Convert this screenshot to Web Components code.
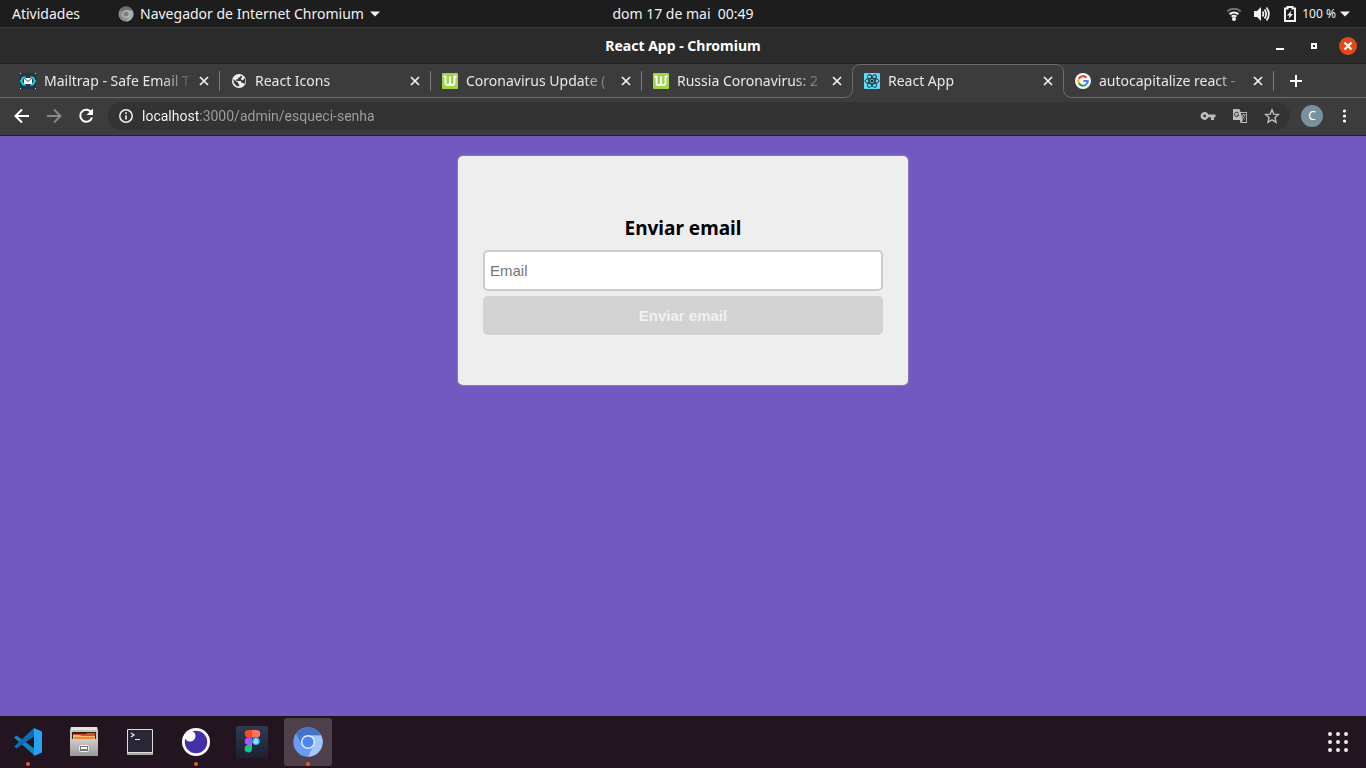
<!DOCTYPE html>
<html lang="pt-BR">
<head>
<meta charset="utf-8">
<title>React App</title>
<style>
html, body { height: 100%; margin: 0; }
body { font-family: "Noto Sans", "Open Sans", sans-serif; font-size: 14px; line-height: 20px; color: #f2f2f2; }
</style>
</head>
<body>
<desktop-shell></desktop-shell>

<template id="t-desktop-shell">
<style>
:host { display: flex; flex-direction: column; min-height: 100%; background: #7159c1; }
main { flex: 1; display: flex; justify-content: center; align-items: flex-start; padding: 20px; }
</style>
<top-bar></top-bar>
<title-bar>React App - Chromium</title-bar>
<tab-strip>
  <browser-tab label="Mailtrap - Safe Email T">
    <svg viewBox="0 0 16 16"><rect width="16" height="16" rx="1" fill="#293346"/><path d="M5.500 4.200C3 4.200 2.200 5 2.200 6.500L1 8l1.200 1.500c0 1.500.8 2.300 3.300 2.300M10.500 4.200c2.500 0 3.300.8 3.300 2.300L15 8l-1.200 1.500c0 1.500-.8 2.300-3.300 2.300" fill="none" stroke="#08e5e6" stroke-width="1.800"/><rect x="4" y="5" width="8" height="6" fill="#fff"/><path d="M4 5l4 3.500L12 5" fill="none" stroke="#293346" stroke-width=".9"/><path d="M0 0h1v1H0zM15 0h1v1h-1zM0 15h1v1H0zM15 15h1v1h-1z" fill="#ccc"/></svg>
  </browser-tab>
  <browser-tab label="React Icons">
    <svg viewBox="0 0 16 16"><circle cx="8" cy="8" r="7" fill="#f2f2f2"/><path d="M2.500 6l3 2.800 1.500.2v1.300l1.200 1.200v2C5 13.500 2 10.500 2.500 6zM8.800 2.600l.9.4-1 1.300-1.700.5v1.400H5.200V8h4.400l1.300 2h1.300l1.100 1c1.400-2 1.300-4.500.2-6L12 7.200l-1.600-.4-.5-1.200 1.400-1.400-.3-1z" fill="#3c3c3c"/></svg>
  </browser-tab>
  <browser-tab label="Coronavirus Update (">
    <svg viewBox="0 0 16 16"><rect width="16" height="16" rx="1" fill="#9dd749"/><path d="M1.500 3.500h2v6c0 1.800.7 2.600 2.100 2.600S8 11.300 8 9.500v-6v6c0 1.800.9 2.600 2.400 2.600s2.100-.8 2.100-2.600v-6h2" fill="none" stroke="#fff" stroke-width="1.800"/></svg>
  </browser-tab>
  <browser-tab label="Russia Coronavirus: 2" last-before>
    <svg viewBox="0 0 16 16"><rect width="16" height="16" rx="1" fill="#9dd749"/><path d="M1.500 3.500h2v6c0 1.800.7 2.600 2.100 2.600S8 11.300 8 9.500v-6v6c0 1.800.9 2.600 2.400 2.600s2.100-.8 2.100-2.600v-6h2" fill="none" stroke="#fff" stroke-width="1.800"/></svg>
  </browser-tab>
  <browser-tab label="React App" active>
    <svg viewBox="0 0 16 16"><rect width="16" height="16" rx="1" fill="#61dafb"/><g fill="none" stroke="#20272e" stroke-width=".9"><ellipse cx="8" cy="8" rx="7" ry="2.700"/><ellipse cx="8" cy="8" rx="7" ry="2.700" transform="rotate(60 8 8)"/><ellipse cx="8" cy="8" rx="7" ry="2.700" transform="rotate(120 8 8)"/></g><circle cx="8" cy="8" r="1.500" fill="#20272e"/></svg>
  </browser-tab>
  <browser-tab label="autocapitalize react -">
    <svg viewBox="0 0 16 16"><circle cx="8" cy="8" r="8" fill="#fff"/><g fill="none" stroke-width="2.200"><path d="M11.500 4.700A4.700 4.700 0 0 0 3.800 5.900" stroke="#ea4335"/><path d="M3.800 5.900a4.700 4.700 0 0 0 0 4.200" stroke="#fbbc05"/><path d="M3.800 10.100a4.700 4.700 0 0 0 7.300 1.400" stroke="#34a853"/><path d="M11.100 11.500A4.700 4.700 0 0 0 12.700 8H8.200" stroke="#4285f4"/></g></svg>
  </browser-tab>
</tab-strip>
<nav-bar></nav-bar>
<main><email-card></email-card></main>
<app-dock></app-dock>
</template>

<template id="t-top-bar">
<style>
:host { display: grid; grid-template-columns: 1fr auto 1fr; align-items: center; height: 27px; background: #1d1d1d; border-bottom: 1px solid #3b3b3b; }
button { font: inherit; color: inherit; background: none; border: 0; padding: 0; display: flex; align-items: center; white-space: pre; }
.left { display: flex; gap: 38px; padding-left: 12px; }
.right { justify-self: end; padding-right: 16px; gap: 12px; font-size: 12px; }
svg { display: block; }
.app { gap: 6px; }
.pct { display: flex; align-items: center; gap: 1px; margin-left: -8px; }
</style>
<div class="left">
  <button>Atividades</button>
  <button class="app">
    <svg width="16" height="16" viewBox="0 0 16 16"><circle cx="8" cy="8" r="7.500" fill="#8d8d8d"/><path d="M8 8L1.500 4.200A7.500 7.500 0 0 1 14.600 4.500H8z" fill="#6e6e6e"/><path d="M8 15.500A7.500 7.500 0 0 0 14.600 4.500H8L11 10z" fill="#a9a9a9"/><circle cx="8" cy="8" r="3.700" fill="#c9c9c9"/><circle cx="8" cy="8" r="2.800" fill="#808080"/></svg>
    <span>Navegador de Internet Chromium</span>
    <svg width="10" height="6" viewBox="0 0 10 6"><path d="M0 .5h10L5 5.500z" fill="#f2f2f2"/></svg>
  </button>
</div>
<button>dom 17 de mai  00:49</button>
<button class="right" aria-label="Sistema">
  <svg width="16" height="16" viewBox="0 0 16 16"><g fill="none" stroke-width="2"><path d="M1.300 5.500a9.500 9.500 0 0 1 13.400 0" stroke="#777"/><path d="M3.600 8.300a6.200 6.200 0 0 1 8.800 0M5.700 10.700a3.200 3.200 0 0 1 4.600 0" stroke="#f2f2f2"/></g><circle cx="8" cy="13" r="2" fill="#f2f2f2"/></svg>
  <svg width="16" height="16" viewBox="0 0 16 16"><path d="M0 5h3l4-4v14l-4-4H0z" fill="#f2f2f2"/><g fill="none" stroke="#f2f2f2" stroke-width="1.700"><path d="M8.500 5.500q1.800 2.500 0 5M10.500 3.500q3.300 4.500 0 9M12.500 1.500q4.800 6.500 0 13"/></g></svg>
  <svg width="16" height="16" viewBox="0 0 16 16"><path d="M3 2.500h2.500V1h5v1.500H13V15H3z" fill="none" stroke="#f2f2f2" stroke-width="2"/><path d="M9.500 4.500L5 9.500h2.500L6.500 13 11 8H8.500z" fill="#f2f2f2"/></svg>
  <span class="pct">100 % <svg width="10" height="6" viewBox="0 0 10 6"><path d="M0 .5h10L5 5.500z" fill="#f2f2f2"/></svg></span>
</button>
</template>

<template id="t-title-bar">
<style>
:host { display: grid; grid-template-columns: 1fr auto 1fr; align-items: center; height: 35px; background: #2b2b2b; border-bottom: 1px solid #222; font-weight: 700; color: #fff; }
.ctl { grid-column: 3; justify-self: end; display: flex; gap: 16px; padding-right: 9px; }
.name { grid-column: 2; }
button { width: 18px; height: 18px; padding: 0; border: 0; background: none; border-radius: 50%; }
button.x { background: #e44a19; }
svg { display: block; }
</style>
<span class="name"><slot></slot></span>
<div class="ctl">
  <button aria-label="Minimizar"><svg width="18" height="18"><path d="M5 11h8v2H5z" fill="#fff"/></svg></button>
  <button aria-label="Maximizar"><svg width="18" height="18"><path d="M7 7h4v4H7z" fill="none" stroke="#fff" stroke-width="2"/></svg></button>
  <button class="x" aria-label="Fechar"><svg width="18" height="18"><path d="M5.500 5.500l7 7m0-7l-7 7" stroke="#fff" stroke-width="2.200"/></svg></button>
</div>
</template>

<template id="t-tab-strip">
<style>
:host { display: flex; height: 33px; padding-left: 9px; background: #3c3c3c; border-bottom: 1px solid #6d6d6d; }
button { padding: 0 14px; border: 0; background: none; }
svg { display: block; }
</style>
<slot></slot>
<button aria-label="Nova aba"><svg width="16" height="16"><path d="M8 2v12M2 8h12" stroke="#fff" stroke-width="2"/></svg></button>
</template>

<template id="t-browser-tab">
<style>
:host { position: relative; display: flex; align-items: center; flex: 0 1 211px; min-width: 0; box-sizing: border-box; padding: 0 9px 0 11px; }
:host(:last-of-type) { flex-basis: 210px; }
:host::after { content: ""; position: absolute; right: 0; top: 7px; width: 1px; height: 20px; background: #7c7c7c; }
:host([active])::after, :host([last-before])::after { display: none; }
.shape { display: none; }
:host([active]) .shape { display: block; position: absolute; left: -9px; top: 0; width: 229px; height: 34px; }
.title { position: relative; flex: 1; min-width: 0; display: flex; align-items: center; gap: 8px; padding: 0; border: 0; background: none; font: inherit; color: #e8e8e8; }
.label { flex: 1; min-width: 0; overflow: hidden; white-space: nowrap; text-align: left; -webkit-mask-image: linear-gradient(90deg, #000 calc(100% - 32px), transparent); mask-image: linear-gradient(90deg, #000 calc(100% - 32px), transparent); }
::slotted(svg) { display: block; flex: none; width: 16px; height: 16px; }
.close { position: relative; flex: none; width: 14px; height: 14px; margin-left: 4px; padding: 0; border: 0; background: none; }
.close svg { display: block; }
</style>
<svg class="shape" viewBox="0 0 229 34"><path d="M0 33.500c5 0 8.500-3 8.500-8V8c0-4.500 3-7.500 8-7.500h195c5 0 8 3 8 7.500v17.500c0 5 4 8 9 8V34H0z" fill="#3c3c3c"/><path d="M0 33.500c5 0 8.500-3 8.500-8V8c0-4.500 3-7.500 8-7.500h195c5 0 8 3 8 7.500v17.500c0 5 4 8 9 8" fill="none" stroke="#6d6d6d"/></svg>
<button class="title"><slot></slot><span class="label"></span></button>
<button class="close" aria-label="Fechar aba"><svg width="14" height="14"><path d="M3 3l8 8m0-8l-8 8" stroke="#f2f2f2" stroke-width="1.700"/></svg></button>
</template>

<template id="t-nav-bar">
<style>
:host { display: flex; align-items: center; height: 36px; padding: 0 11px 1px 12px; background: #3c3c3c; border-bottom: 1px solid #222; }
button { flex: none; padding: 0; border: 0; background: none; }
svg { display: block; }
.nav { display: flex; gap: 12px; margin-right: 12px; }
.box { flex: 1; display: flex; align-items: center; height: 28px; padding: 0 10px 0 8px; border-radius: 14px; background: #333; }
input { flex: 1; min-width: 0; height: 20px; margin-left: 6px; padding: 0; border: 0; outline: 0; font: 14px Roboto, "Noto Sans", sans-serif; color: transparent; -webkit-text-fill-color: transparent; background: linear-gradient(90deg, #fff 58px, #a0a0a0 58px); -webkit-background-clip: text; background-clip: text; }
.acts { display: flex; gap: 16px; }
.avatar { width: 22px; height: 22px; margin: 0 12px 0 11px; border-radius: 50%; background: #78909c; color: #fff; font: inherit; font-size: 12px; }
</style>
<div class="nav">
  <button aria-label="Voltar"><svg width="20" height="20"><path d="M17 10H4M10 3.500L3.500 10l6.500 6.500" fill="none" stroke="#fff" stroke-width="2"/></svg></button>
  <button aria-label="Avançar"><svg width="20" height="20"><path d="M3 10h13M10 3.500l6.500 6.500-6.500 6.500" fill="none" stroke="#888" stroke-width="2"/></svg></button>
  <button aria-label="Recarregar"><svg width="20" height="20"><path d="M15.600 7A6 6 0 1 0 16 11.500" fill="none" stroke="#fff" stroke-width="2"/><path d="M17 2.500V9h-6.500z" fill="#fff"/></svg></button>
</div>
<div class="box">
  <button aria-label="Informações do site"><svg width="20" height="20"><circle cx="10" cy="10" r="6.200" fill="none" stroke="#f2f2f2" stroke-width="1.500"/><path d="M9.200 9.200h1.600v4.300H9.200zM9.200 6.300h1.600v1.700H9.200z" fill="#f2f2f2"/></svg></button>
  <input aria-label="Endereço" value="localhost:3000/admin/esqueci-senha" spellcheck="false">
  <div class="acts">
    <button aria-label="Senhas"><svg width="16" height="16"><path d="M8.300 6.500A4 4 0 1 0 8.300 9.300H11V12h3V9.300h1.500V6.500zM4.600 9.300a1.400 1.400 0 1 1 0-2.800 1.400 1.400 0 0 1 0 2.800z" fill="#bdbdbd"/></svg></button>
    <button aria-label="Traduzir"><svg width="16" height="16"><path d="M1 1h6.500l1 3H15v11H8.500L7.800 12H1z" fill="#bdbdbd"/><path d="M8.900 4.900h5.200v9.200H9.700l1.200-1.900z" fill="#333"/><path d="M6.500 5.200A2.200 2.200 0 1 0 6.800 7H4.800" fill="none" stroke="#333" stroke-width="1"/><path d="M9.500 7h4M11.500 6v1M12.700 7c-.3 1.800-1.500 3-2.500 3.700M10.300 8c.6 1.500 1.700 2.600 2.700 3.400" fill="none" stroke="#bdbdbd" stroke-width=".8"/></svg></button>
    <button aria-label="Favoritos"><svg width="16" height="16"><path d="M8 1.800l1.800 4.300 4.700.4-3.500 3.100 1 4.600L8 11.800l-4 2.400 1-4.600L1.500 6.500l4.700-.4z" fill="none" stroke="#bdbdbd" stroke-width="1.400"/></svg></button>
  </div>
</div>
<button class="avatar">C</button>
<button aria-label="Menu"><svg width="20" height="20"><circle cx="9.500" cy="5" r="1.600" fill="#fff"/><circle cx="9.500" cy="10" r="1.600" fill="#fff"/><circle cx="9.500" cy="15" r="1.600" fill="#fff"/></svg></button>
</template>

<template id="t-email-card">
<style>
:host { display: block; width: 100%; max-width: 450px; box-sizing: border-box; padding: 50px 25px; border-radius: 5px; background: #eee; box-shadow: 0 0 2px #bbb; }
form { display: flex; flex-direction: column; }
h1 { margin: 0; font-size: 19px; line-height: 44px; text-align: center; color: #000; }
input, button { box-sizing: border-box; width: 100%; border-radius: 5px; font: 15px "Liberation Sans", Arial, sans-serif; }
input { height: 41px; padding: 0 5px; border: 2px solid #ccc; background: #fff; }
input::placeholder { color: #757575; }
button { height: 39px; margin-top: 5px; border: 0; background: #d2d2d2; color: #f0f0f0; font-weight: 700; }
</style>
<form>
  <h1>Enviar email</h1>
  <input type="email" placeholder="Email" aria-label="Email">
  <button type="submit" disabled>Enviar email</button>
</form>
</template>

<template id="t-app-dock">
<style>
:host { display: flex; align-items: center; justify-content: space-between; height: 52px; padding: 0 4px; background: #22151f; }
.apps { display: flex; gap: 8px; }
.all { width: 48px; height: 48px; border: 0; padding: 0; background: none; }
svg { display: block; margin: auto; }
</style>
<div class="apps">
  <dock-item label="Visual Studio Code" running><svg width="32" height="32"><path d="M2 11.500l2.500-2L23 23v7z" fill="#1583c8"/><path d="M2 20.500L22 2v8.500L4.500 22.500z" fill="#0b6cb2"/><path d="M22 2l8 3.500v21L22 30z" fill="#27a4ef"/></svg></dock-item>
  <dock-item label="Arquivos"><svg width="32" height="32"><defs><linearGradient id="fg" x2="0" y2="1"><stop stop-color="#cfcfcd"/><stop offset="1" stop-color="#999996"/></linearGradient></defs><path d="M3 1h26l1 4H2z" fill="#e4e4e1"/><rect x="2" y="4" width="28" height="26" rx="1" fill="#c3c3c0"/><path d="M4 6h24v8H4z" fill="#382018"/><path d="M5 8h13l1-1h8v6H5z" fill="#d5502a"/><path d="M5 9h7l1 1h14v4H5z" fill="#f6bd70"/><path d="M6 11h20v3H6z" fill="#ef8436"/><path d="M2 13h28v15l-1 2H3l-1-2z" fill="url(#fg)"/><rect x="11.500" y="19.500" width="9" height="6" rx="1" fill="#777" stroke="#eee"/><path d="M13 21h6v2h-6z" fill="#fff"/></svg></dock-item>
  <dock-item label="Terminal"><svg width="32" height="32"><rect x="3" y="3" width="26" height="26" rx="1" fill="#dededa"/><rect x="4" y="4" width="24" height="22" fill="#292638"/><path d="M3 27h26v2H3z" fill="#aaa9a3"/><path d="M7 7l3 2-3 2M11 13.500h5" fill="none" stroke="#f2f2f2" stroke-width="1.200"/></svg></dock-item>
  <dock-item label="Insomnia" running><svg width="32" height="32"><circle cx="16" cy="16" r="14" fill="#fff"/><circle cx="16" cy="16" r="11.200" fill="#4530ab"/><circle cx="10" cy="10" r="5.500" fill="#fff"/></svg></dock-item>
  <dock-item label="Figma"><svg width="32" height="32"><defs><linearGradient id="gg" x2="0" y2="1"><stop stop-color="#323850"/><stop offset="1" stop-color="#1c2132"/></linearGradient></defs><rect width="32" height="32" rx="2" fill="url(#gg)"/><path d="M16 4h-3.500a3.700 3.700 0 0 0 0 7.500H16z" fill="#f24e1e"/><path d="M16 4h4.500a3.700 3.700 0 0 1 0 7.500H16z" fill="#ff7262"/><path d="M16 11.500h-3.500a3.700 3.700 0 0 0 0 7.500H16z" fill="#a259ff"/><circle cx="20" cy="15.300" r="3.800" fill="#1abcfe"/><path d="M16 19h-3.500a3.700 3.700 0 1 0 3.500 3.700z" fill="#0acf83"/><path d="M20 12.500c1.500 2 2 3 1.500 4.500h-3c-.5-1.500 0-2.500 1.500-4.500zM20 14v3" fill="none" stroke="#fff" stroke-width=".8"/></svg></dock-item>
  <dock-item label="Chromium" running active><svg width="32" height="32"><circle cx="16" cy="16" r="14.700" fill="#6a9cf5"/><path d="M16 16L4 8A14.700 14.700 0 0 1 29.200 9.500H16z" fill="#4671c6"/><path d="M16 30.700A14.700 14.700 0 0 0 29.200 9.500H16l6 9.500z" fill="#a6c5fb"/><path d="M4 8l6 11 3-8z" fill="#4a78d0"/><circle cx="16" cy="16" r="7" fill="#e8effc"/><circle cx="16" cy="16" r="5.600" fill="#4c87ee"/></svg></dock-item>
</div>
<button class="all" aria-label="Mostrar aplicativos"><svg width="20" height="20" fill="#f2f2f2"><circle cx="2" cy="2" r="2"/><circle cx="10" cy="2" r="2"/><circle cx="18" cy="2" r="2"/><circle cx="2" cy="10" r="2"/><circle cx="10" cy="10" r="2"/><circle cx="18" cy="10" r="2"/><circle cx="2" cy="18" r="2"/><circle cx="10" cy="18" r="2"/><circle cx="18" cy="18" r="2"/></svg></button>
</template>

<template id="t-dock-item">
<style>
:host { position: relative; display: block; width: 48px; height: 48px; }
button { display: grid; place-items: center; width: 100%; height: 100%; padding: 0; border: 0; border-radius: 3px; background: none; }
:host([active]) button { background: #4d404a; }
:host([running])::after { content: ""; position: absolute; left: 22px; bottom: 0; width: 4px; height: 4px; border-radius: 2px; background: #f0561f; }
::slotted(svg) { display: block; }
</style>
<button><slot></slot></button>
</template>

<script>
class Base extends HTMLElement {
  constructor() {
    super();
    const tpl = document.getElementById("t-" + this.localName);
    this.attachShadow({ mode: "open" }).append(tpl.content.cloneNode(true));
  }
}
class BrowserTab extends Base {
  connectedCallback() {
    this.shadowRoot.querySelector(".label").textContent = this.getAttribute("label");
  }
}
class DockItem extends Base {
  connectedCallback() {
    this.shadowRoot.querySelector("button").setAttribute("aria-label", this.getAttribute("label"));
  }
}
customElements.define("browser-tab", BrowserTab);
customElements.define("dock-item", DockItem);
for (const name of ["top-bar", "title-bar", "tab-strip", "nav-bar", "email-card", "app-dock", "desktop-shell"]) {
  customElements.define(name, class extends Base {});
}
</script>
</body>
</html>
